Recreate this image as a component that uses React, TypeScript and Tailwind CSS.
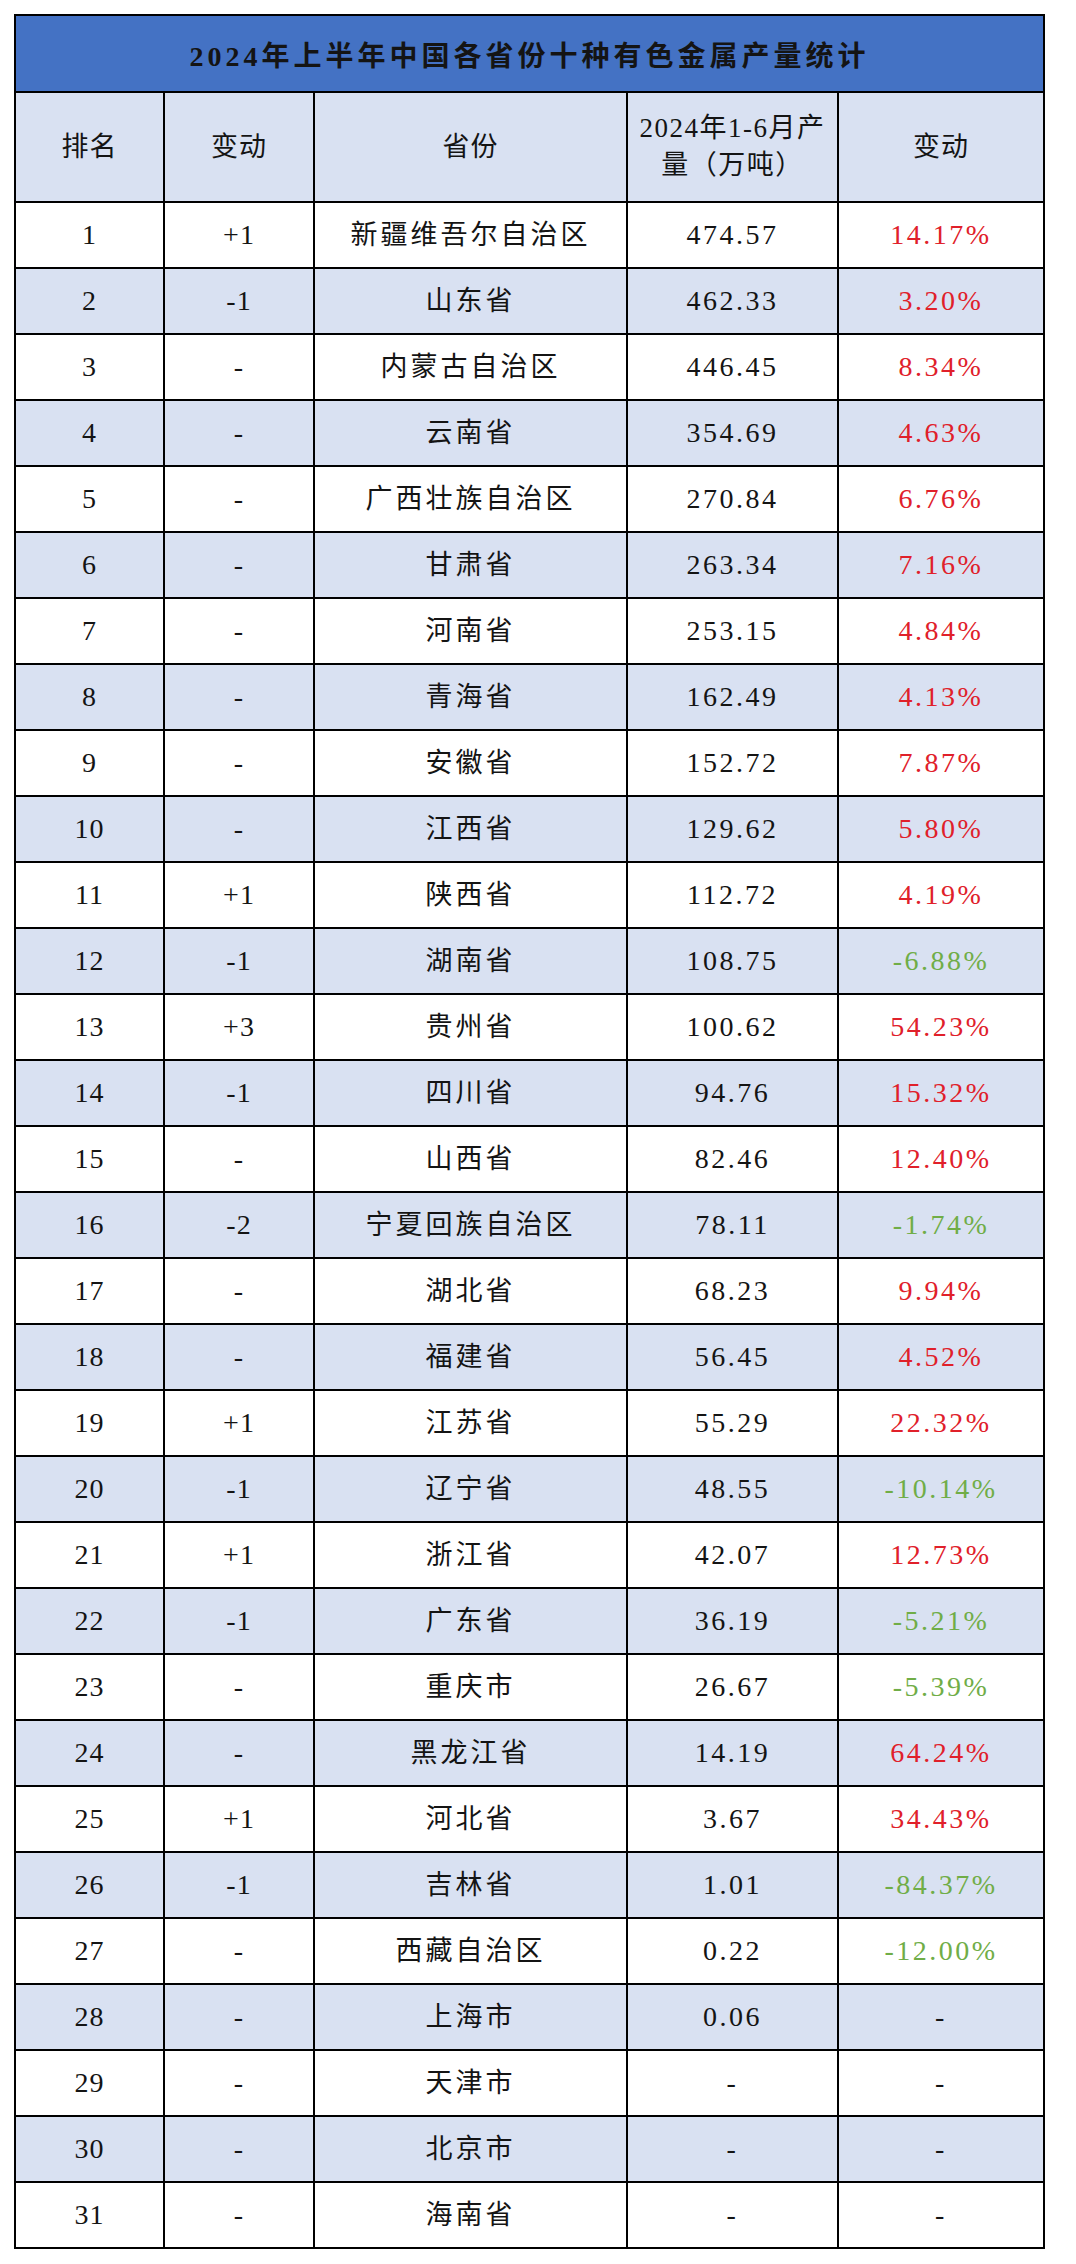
import React from 'react'

type Row = [number, string, string, string, string]

const rows: Row[] = [
  [1, '+1', '新疆维吾尔自治区', '474.57', '14.17%'],
  [2, '-1', '山东省', '462.33', '3.20%'],
  [3, '-', '内蒙古自治区', '446.45', '8.34%'],
  [4, '-', '云南省', '354.69', '4.63%'],
  [5, '-', '广西壮族自治区', '270.84', '6.76%'],
  [6, '-', '甘肃省', '263.34', '7.16%'],
  [7, '-', '河南省', '253.15', '4.84%'],
  [8, '-', '青海省', '162.49', '4.13%'],
  [9, '-', '安徽省', '152.72', '7.87%'],
  [10, '-', '江西省', '129.62', '5.80%'],
  [11, '+1', '陕西省', '112.72', '4.19%'],
  [12, '-1', '湖南省', '108.75', '-6.88%'],
  [13, '+3', '贵州省', '100.62', '54.23%'],
  [14, '-1', '四川省', '94.76', '15.32%'],
  [15, '-', '山西省', '82.46', '12.40%'],
  [16, '-2', '宁夏回族自治区', '78.11', '-1.74%'],
  [17, '-', '湖北省', '68.23', '9.94%'],
  [18, '-', '福建省', '56.45', '4.52%'],
  [19, '+1', '江苏省', '55.29', '22.32%'],
  [20, '-1', '辽宁省', '48.55', '-10.14%'],
  [21, '+1', '浙江省', '42.07', '12.73%'],
  [22, '-1', '广东省', '36.19', '-5.21%'],
  [23, '-', '重庆市', '26.67', '-5.39%'],
  [24, '-', '黑龙江省', '14.19', '64.24%'],
  [25, '+1', '河北省', '3.67', '34.43%'],
  [26, '-1', '吉林省', '1.01', '-84.37%'],
  [27, '-', '西藏自治区', '0.22', '-12.00%'],
  [28, '-', '上海市', '0.06', '-'],
  [29, '-', '天津市', '-', '-'],
  [30, '-', '北京市', '-', '-'],
  [31, '-', '海南省', '-', '-'],
]

const cell = 'border-2 border-black text-center align-middle p-0'

export default function App() {
  return (
    <div className="min-h-[2264px] bg-white pt-[14px] pl-[14px] font-['Liberation_Serif','Noto_Sans_CJK_SC',serif] text-[#141414]">
      <table className="border-collapse table-fixed w-[1031px]">
        <colgroup>
          <col className="w-[149px]" />
          <col className="w-[150px]" />
          <col className="w-[313px]" />
          <col className="w-[211px]" />
          <col className="w-[206px]" />
        </colgroup>
        <thead>
          <tr className="h-[77px] bg-[#4472C4]">
            <th colSpan={5} className={`${cell} text-[28px] font-bold tracking-[4px] pt-[6px]`}>
              2024年上半年中国各省份十种有色金属产量统计
            </th>
          </tr>
          <tr className="h-[110px] bg-[#D9E1F2] text-[27px] font-normal">
            <th className={`${cell} font-normal tracking-[1px]`}>排名</th>
            <th className={`${cell} font-normal tracking-[1px]`}>变动</th>
            <th className={`${cell} font-normal tracking-[1px]`}>省份</th>
            <th className={`${cell} font-normal leading-[37px] tracking-[1.5px]`}>
              2024年1-6月产<br />量（万吨）
            </th>
            <th className={`${cell} font-normal tracking-[1px]`}>变动</th>
          </tr>
        </thead>
        <tbody>
          {rows.map(([rank, move, prov, qty, pct]) => {
            const neg = pct.startsWith('-') && pct !== '-'
            const color = pct === '-' ? 'text-[#141414]' : neg ? 'text-[#70AD47]' : 'text-[#E0202A]'
            return (
              <tr key={rank} className={`h-[66px] ${rank % 2 === 0 ? 'bg-[#D9E1F2]' : 'bg-white'}`}>
                <td className={`${cell} text-[28px] tracking-[1px]`}>{rank}</td>
                <td className={`${cell} text-[28px] tracking-[1px]`}>{move}</td>
                <td className={`${cell} text-[27px] tracking-[3px]`}>{prov}</td>
                <td className={`${cell} text-[28px] tracking-[2.5px]`}>{qty}</td>
                <td className={`${cell} text-[28px] tracking-[2.5px] ${color}`}>{pct}</td>
              </tr>
            )
          })}
        </tbody>
      </table>
    </div>
  )
}
